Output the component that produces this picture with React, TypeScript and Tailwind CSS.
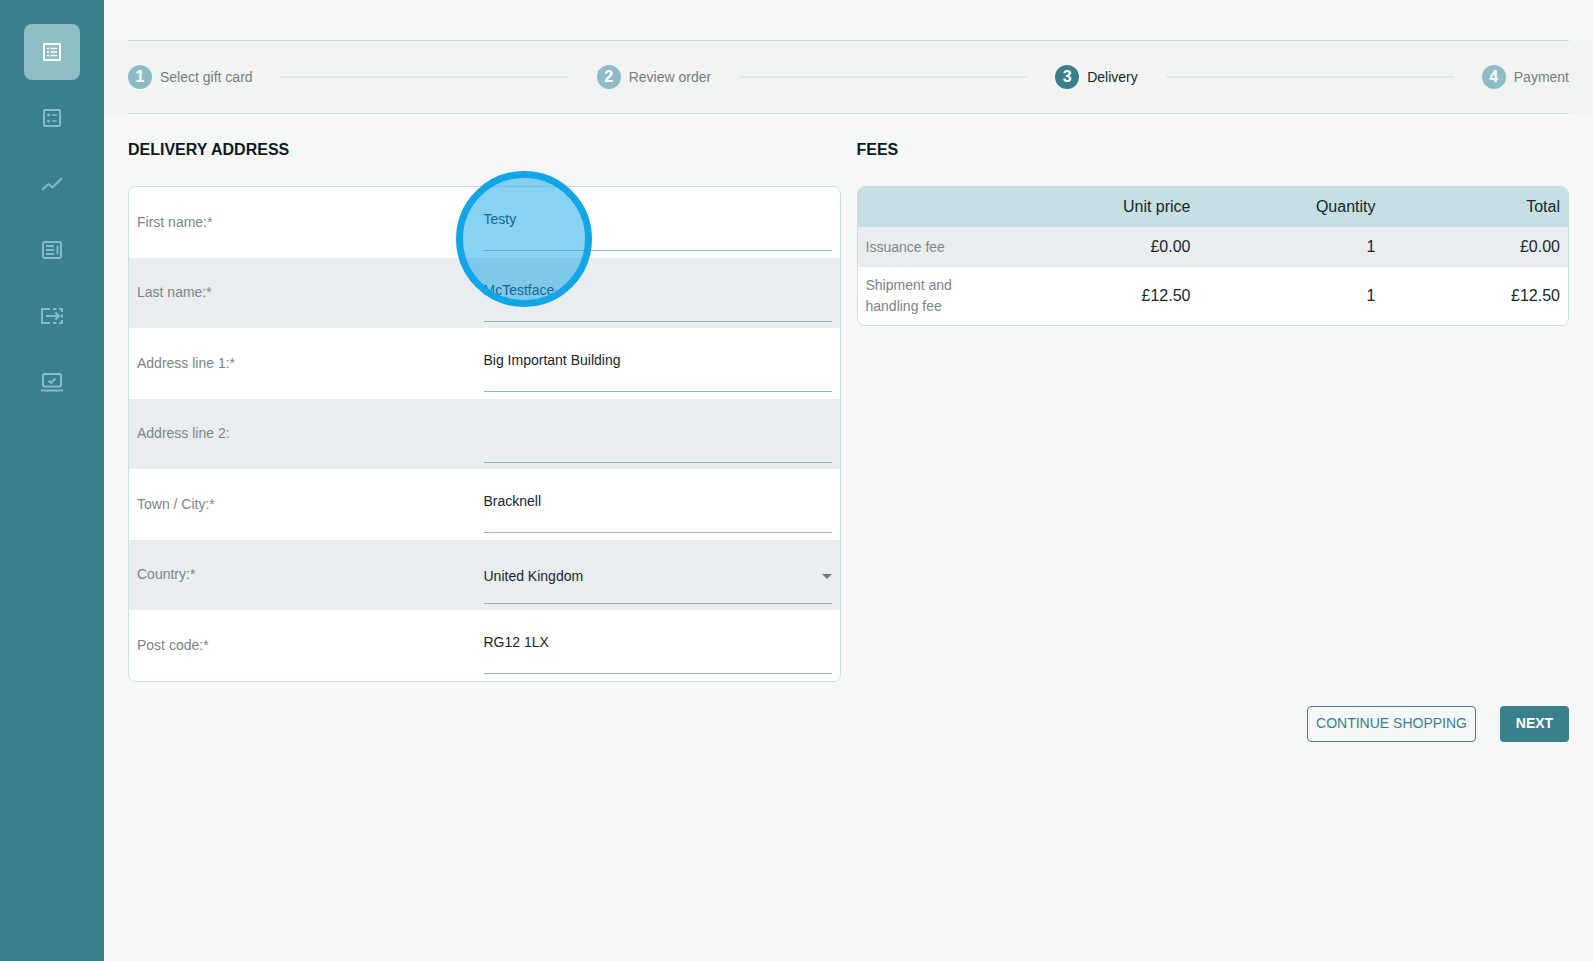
import React from 'react';

const fields = [
  { label: 'First name:*', value: 'Testy' },
  { label: 'Last name:*', value: 'McTestface' },
  { label: 'Address line 1:*', value: 'Big Important Building' },
  { label: 'Address line 2:', value: '' },
  { label: 'Town / City:*', value: 'Bracknell' },
  { label: 'Country:*', value: 'United Kingdom', select: true },
  { label: 'Post code:*', value: 'RG12 1LX' },
];

const steps = [
  { n: 1, label: 'Select gift card' },
  { n: 2, label: 'Review order' },
  { n: 3, label: 'Delivery', active: true },
  { n: 4, label: 'Payment' },
];

const fees = [
  { name: 'Issuance fee', price: '£0.00', qty: '1', total: '£0.00' },
  { name: 'Shipment and handling fee', price: '£12.50', qty: '1', total: '£12.50' },
];

const IconOrder = () => (
  <svg width="20" height="20" viewBox="0 0 20 20" fill="none" stroke="currentColor" strokeWidth="2">
    <rect x="2" y="2" width="16" height="16" />
    <path d="M5 6.500h2M5 10h2M5 13.500h2M8.500 6.500h6.500M8.500 10h6.500M8.500 13.500h6.500" strokeWidth="1.700" />
  </svg>
);

const IconList = () => (
  <svg width="20" height="20" viewBox="0 0 20 20" fill="none" stroke="currentColor" strokeWidth="2">
    <rect x="2" y="2" width="16" height="16" rx="1.500" />
    <circle cx="6.500" cy="7" r="1.500" fill="currentColor" stroke="none" />
    <circle cx="6.500" cy="13" r="1.500" fill="currentColor" stroke="none" />
    <path d="M10 7h5M10 13h5" strokeWidth="1.600" />
  </svg>
);

const IconTrend = () => (
  <svg width="22" height="22" viewBox="0 0 22 22" fill="none" stroke="currentColor" strokeWidth="2">
    <path d="M1 17l6.500-6 4 3.500L21 5" />
  </svg>
);

const IconNews = () => (
  <svg width="22" height="20" viewBox="0 0 22 20" fill="none" stroke="currentColor" strokeWidth="2">
    <rect x="2" y="2" width="18" height="16" rx="1.500" />
    <path d="M5 6h8M5 10h8M5 14h8M16.500 5.500v9" strokeWidth="1.800" />
  </svg>
);

const IconTransfer = () => (
  <svg width="24" height="18" viewBox="0 0 24 18" fill="none" stroke="currentColor" strokeWidth="2">
    <path d="M10 2H2v14h8" />
    <path d="M6 9h13M15.500 5.500L19 9l-3.500 3.500" />
    <path d="M13 2h3.500M19 2h3v3M22 7.500v3M22 13v3h-3M16.500 16H13" />
  </svg>
);

const IconLaptop = () => (
  <svg width="24" height="20" viewBox="0 0 24 20" fill="none" stroke="currentColor" strokeWidth="2">
    <rect x="3" y="2" width="18" height="12.500" rx="1" />
    <path d="M1 18.500h22" />
    <path d="M8.500 8.500l2.500 2.500 4.500-4.500" />
  </svg>
);

const navIcons = [IconOrder, IconList, IconTrend, IconNews, IconTransfer, IconLaptop];

export default function App() {
  return (
    <div className="relative flex h-screen overflow-hidden bg-[#f6f8f8] font-['Liberation_Sans',Arial,sans-serif] text-sm">
      <aside className="flex w-[104px] shrink-0 flex-col items-center gap-[10px] bg-[#3a7f8c] pt-6">
        {navIcons.map((Icon, i) => (
          <div
            key={i}
            className={
              i === 0
                ? 'flex h-14 w-14 items-center justify-center rounded-lg bg-[#8fbdc6] text-white'
                : 'flex h-14 w-14 items-center justify-center rounded-lg text-[#85bcc7]'
            }
          >
            <Icon />
          </div>
        ))}
      </aside>

      <main className="min-w-0 flex-1 pt-10">
        <div className="bg-[#f2f4f4] px-6">
          <div className="flex h-[74px] items-center border-y border-[#c6dcdd]">
            {steps.map((step, i) => (
              <React.Fragment key={step.n}>
                {i > 0 && <div className="mx-7 h-0.5 flex-1 bg-[#e4e8e8]" />}
                <div className="flex items-center gap-2">
                  <span
                    className={
                      step.active
                        ? 'flex h-6 w-6 items-center justify-center rounded-full bg-[#3a7f8c] text-base font-bold text-white'
                        : 'flex h-6 w-6 items-center justify-center rounded-full bg-[#8dbcc7] text-base font-bold text-white'
                    }
                  >
                    {step.n}
                  </span>
                  <span className={step.active ? 'text-[#16262b]' : 'text-[#757d80]'}>{step.label}</span>
                </div>
              </React.Fragment>
            ))}
          </div>
        </div>

        <div className="grid grid-cols-2 gap-4 px-6 pt-6">
          <section>
            <h2 className="mb-6 text-base font-bold text-[#0c1a1f]">DELIVERY ADDRESS</h2>
            <div className="flex h-[496px] flex-col overflow-hidden rounded-lg border border-[#c9dfe0] bg-white">
              {fields.map((field, i) => (
                <div
                  key={field.label}
                  className={
                    i % 2 === 1
                      ? 'flex min-h-0 flex-1 items-center bg-[#e9edef] pl-2 pr-2'
                      : 'flex min-h-0 flex-1 items-center bg-white pl-2 pr-2'
                  }
                >
                  <label className="flex-1 pb-[1.400px] text-[#7b8588]">{field.label}</label>
                  <div className="flex w-[348px] flex-col self-stretch justify-end pb-[6.600px]">
                    {field.select ? (
                      <div className="flex h-[38px] items-start justify-between border-b border-[#8db8c2] text-[#16262b]">
                        <span className="leading-5">{field.value}</span>
                        <span className="mt-[8px] h-0 w-0 border-x-[5px] border-t-[5px] border-x-transparent border-t-[#6f7a7e]" />
                      </div>
                    ) : (
                      <div className="h-[42px] border-b border-[#8db8c2] leading-5 text-[#16262b]">{field.value}</div>
                    )}
                  </div>
                </div>
              ))}
            </div>
          </section>

          <section>
            <h2 className="mb-6 text-base font-bold text-[#0c1a1f]">FEES</h2>
            <div className="overflow-hidden rounded-lg border border-[#c9dfe0] bg-white">
              <div className="grid h-10 grid-cols-[148px_185px_185px_1fr] items-center bg-[#c5dfe3] pr-2 text-base text-[#16262b]">
                <span />
                <span className="text-right">Unit price</span>
                <span className="text-right">Quantity</span>
                <span className="text-right">Total</span>
              </div>
              {fees.map((fee, i) => (
                <div
                  key={fee.name}
                  className={
                    i % 2 === 0
                      ? 'grid h-10 grid-cols-[148px_185px_185px_1fr] items-center bg-[#e9edef] pr-2 text-base text-[#16262b]'
                      : 'grid h-[58px] grid-cols-[148px_185px_185px_1fr] items-center bg-white pr-2 text-base text-[#16262b]'
                  }
                >
                  <span className="pl-2 pr-8 text-sm leading-[21px] text-[#7b8588]">{fee.name}</span>
                  <span className="text-right">{fee.price}</span>
                  <span className="text-right">{fee.qty}</span>
                  <span className="text-right">{fee.total}</span>
                </div>
              ))}
            </div>
          </section>
        </div>

        <div className="mt-6 flex justify-end gap-6 px-6">
          <button className="h-9 w-[169px] rounded border border-[#3a7f8c] pb-0.5 text-[#3a7f8c]">CONTINUE SHOPPING</button>
          <button className="h-9 w-[69px] rounded bg-[#3a7f8c] pb-0.5 font-bold text-white">NEXT</button>
        </div>
      </main>

      {/* click highlight from the recording */}
      <div className="absolute left-[456px] top-[171px] h-[136px] w-[136px] rounded-full border-[7px] border-[#12a5e8] bg-[#12a5e8]/50" />
    </div>
  );
}
